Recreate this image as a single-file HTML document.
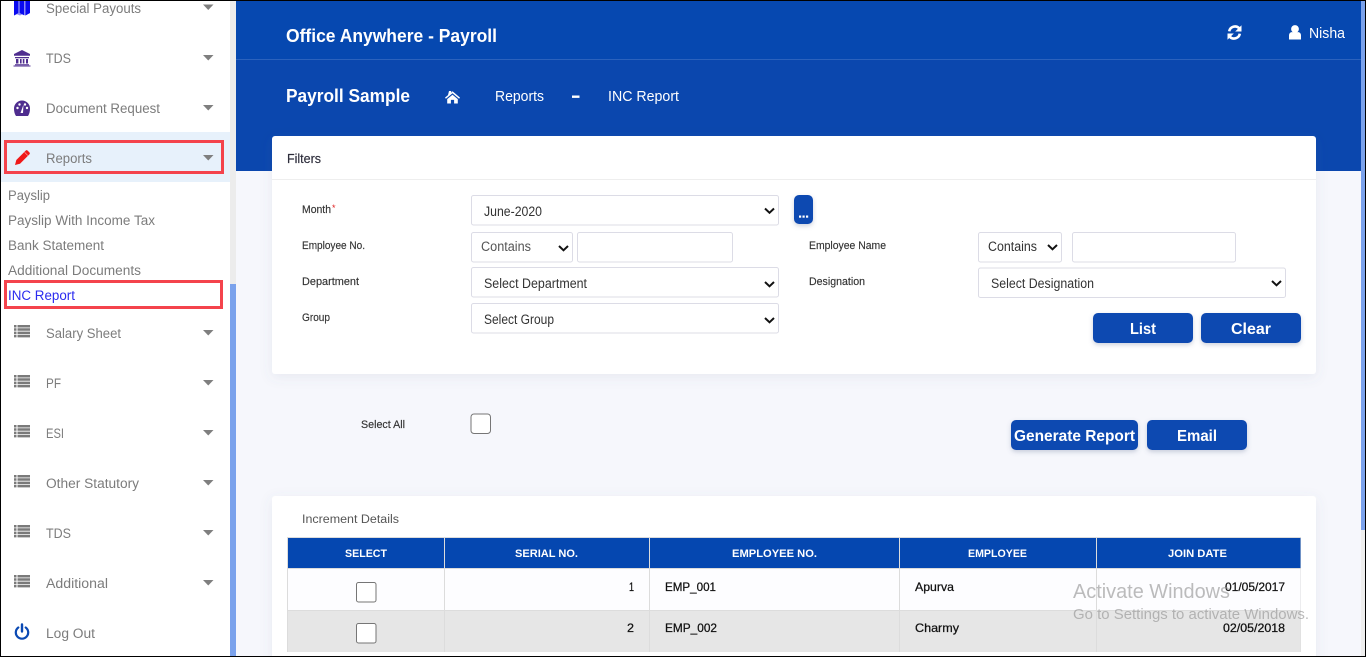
<!DOCTYPE html>
<html lang="en"><head><meta charset="utf-8"><title>INC Report</title>
<style>
html,body{margin:0;padding:0;width:1366px;height:657px;overflow:hidden;background:#000}
svg{display:block}
text{font-family:"Liberation Sans",sans-serif;white-space:pre}
.s{font-size:13.5px;fill:#7c7c7c}
.l{font-size:11px;fill:#333;stroke:#333;stroke-width:.15}
.c{font-size:13.5px;fill:#333}
.w{fill:#fff}
.b{font-size:16px;font-weight:700;fill:#fff}
.h{font-size:11px;font-weight:700;fill:#fff}
.d{font-size:12px;fill:#111;stroke:#111;stroke-width:.25}
.box{fill:#fff;stroke:#dcdce6;stroke-width:1}
.ar{fill:#7f7f7f}
.ch{fill:none;stroke:#111;stroke-width:2}
.cb{fill:#fff;stroke:#767676;stroke-width:1}
.btn{fill:#0c49b1;filter:url(#sh)}
</style></head>
<body>
<svg width="1366" height="657" viewBox="0 0 1366 657" xmlns="http://www.w3.org/2000/svg">
<defs>
<filter id="sh" x="-20%" y="-30%" width="140%" height="170%"><feDropShadow dx="0" dy="2" stdDeviation="2.5" flood-color="#5a6a90" flood-opacity=".3"/></filter>
<filter id="sc" x="-5%" y="-10%" width="110%" height="125%"><feDropShadow dx="0" dy="3" stdDeviation="6" flood-color="#5a6a90" flood-opacity=".1"/></filter>
<g id="list" fill="#7a7a7a"><path d="M0 0h2.500v2.500H0zM3.500 0H16v2.500H3.500zM0 3.300h2.500v2.500H0zM3.500 3.300H16v2.500H3.500zM0 6.600h2.500v2.500H0zM3.500 6.600H16v2.500H3.500zM0 9.900h2.500v2.500H0zM3.500 9.900H16v2.500H3.500z"/></g>
<path id="arr" class="ar" d="M0 0h10.500L5.250 5.500z"/>
</defs>

<!-- page -->
<rect x="1" y="1" width="1364" height="655" fill="#f6f7fc"/>
<rect x="236" y="1" width="1125" height="170" fill="#0648b0"/>
<rect x="236" y="60" width="1125" height="111" fill="#0b47ae"/>
<rect x="236" y="59" width="1125" height="1" fill="#2b62bd"/>

<!-- sidebar -->
<rect x="1" y="1" width="229" height="655" fill="#fff"/>
<rect x="1" y="132" width="229" height="50" fill="#e7f1fb"/>
<rect x="230" y="1" width="6" height="655" fill="#ececec"/>
<rect x="230" y="284" width="6" height="372" fill="#7ba2ec"/>
<rect x="1361" y="1" width="4" height="655" fill="#eeeeee"/>
<rect x="1361" y="1" width="4" height="529" fill="#7ba2ec"/>

<!-- sidebar icons -->
<path d="M14 0h16v13l-5 2.500-2.500-1.200-2.500 1.200-3-1.200L14 15.500z" fill="#8a8af5"/>
<path d="M14 0h4.300v13l-4.300 2.500zM19.700 0h4.300v15.300l-4.300-2.300zM25.500 0H30v13l-4.500 2.500z" fill="#0a0af0"/>
<path d="M22 50l8 4v1.800H14V54zM15 57h14v1.200H15zM16 59h2.400v4.500H16zM20 59h1.600v4.500H20zM22.800 59h1.600v4.500h-1.600zM26 59h2v4.500h-2zM15 64.200h14v1H15zM13.500 65.500h17v1h-17z" fill="#4f2d8f"/>
<path d="M22 100.500a8 8 0 0 1 8 8c0 3-.6 5.500-2 7.500H16c-1.400-2-2-4.500-2-7.500a8 8 0 0 1 8-8z" fill="#4f2d8f"/>
<circle cx="17.500" cy="108" r="1.200" fill="#fff"/><circle cx="19.500" cy="104.500" r="1.200" fill="#fff"/><circle cx="25" cy="104.500" r="1.200" fill="#fff"/><circle cx="27" cy="108" r="1.200" fill="#fff"/>
<path d="M23.500 104.500l-.5 8.500h-2.500z" fill="#fff"/>
<path d="M15 165l1.300-5 9.500-9.500a1.200 1.200 0 0 1 1.700 0l2 2a1.200 1.200 0 0 1 0 1.700l-9.500 9.500z" fill="#f01818"/>
<path d="M24.600 152.300l3.200 3.200" stroke="#ff9a9a" stroke-width=".7" fill="none"/>
<use href="#list" x="14" y="325"/><use href="#list" x="14" y="375"/><use href="#list" x="14" y="425"/><use href="#list" x="14" y="475"/><use href="#list" x="14" y="525"/><use href="#list" x="14" y="575"/>
<path d="M18.300 627.500a6.200 6.200 0 1 0 7.400 0" fill="none" stroke="#0a49b3" stroke-width="2.200" stroke-linecap="round"/>
<path d="M22 624.500v7" stroke="#0a49b3" stroke-width="2.400" stroke-linecap="round"/>

<!-- arrows -->
<use href="#arr" x="203" y="4.500"/><use href="#arr" x="203" y="55"/><use href="#arr" x="203" y="105"/><use href="#arr" x="203" y="155"/><use href="#arr" x="203" y="330"/><use href="#arr" x="203" y="380"/><use href="#arr" x="203" y="430"/><use href="#arr" x="203" y="480"/><use href="#arr" x="203" y="530"/><use href="#arr" x="203" y="580"/>

<!-- sidebar text -->
<text class="s" x="46" y="13" textLength="95" lengthAdjust="spacingAndGlyphs">Special Payouts</text>
<text class="s" x="46" y="63" textLength="25" lengthAdjust="spacingAndGlyphs">TDS</text>
<text class="s" x="46" y="113" textLength="114" lengthAdjust="spacingAndGlyphs">Document Request</text>
<text class="s" x="46" y="163" textLength="46" lengthAdjust="spacingAndGlyphs">Reports</text>
<text class="s" x="8" y="200" textLength="42" lengthAdjust="spacingAndGlyphs">Payslip</text>
<text class="s" x="8" y="225" textLength="147" lengthAdjust="spacingAndGlyphs">Payslip With Income Tax</text>
<text class="s" x="8" y="250" textLength="96" lengthAdjust="spacingAndGlyphs">Bank Statement</text>
<text class="s" x="8" y="275" textLength="133" lengthAdjust="spacingAndGlyphs">Additional Documents</text>
<text class="s" x="8" y="300" textLength="67" lengthAdjust="spacingAndGlyphs" style="fill:#2b2bef">INC Report</text>
<text class="s" x="46" y="338" textLength="75" lengthAdjust="spacingAndGlyphs">Salary Sheet</text>
<text class="s" x="46" y="388" textLength="15" lengthAdjust="spacingAndGlyphs">PF</text>
<text class="s" x="46" y="438" textLength="18" lengthAdjust="spacingAndGlyphs">ESI</text>
<text class="s" x="46" y="488" textLength="93" lengthAdjust="spacingAndGlyphs">Other Statutory</text>
<text class="s" x="46" y="538" textLength="25" lengthAdjust="spacingAndGlyphs">TDS</text>
<text class="s" x="46" y="588" textLength="62" lengthAdjust="spacingAndGlyphs">Additional</text>
<text class="s" x="46" y="638" textLength="49" lengthAdjust="spacingAndGlyphs">Log Out</text>

<!-- red highlight boxes -->
<rect x="5.500" y="141.500" width="217" height="31" fill="none" stroke="#f4434c" stroke-width="3"/>
<rect x="5.500" y="281.500" width="216" height="26" fill="none" stroke="#f4434c" stroke-width="3"/>

<!-- header text -->
<text class="w" x="286" y="42" font-size="18.500" font-weight="700" textLength="211" lengthAdjust="spacingAndGlyphs">Office Anywhere - Payroll</text>
<text class="w" x="286" y="102" font-size="18.500" font-weight="700" textLength="124" lengthAdjust="spacingAndGlyphs">Payroll Sample</text>
<path d="M449 91h2.200v1.700L452.500 91.300l7.500 6.300-.9 1.100-6.600-5.500-6.600 5.500-.9-1.100 3-2.500zM452.500 94.700l5.300 4.400v4.400h-3.700v-3.600h-3.200v3.600h-3.700v-4.400z" fill="#fff"/>
<text class="w" x="495" y="101" font-size="14.500" textLength="49" lengthAdjust="spacingAndGlyphs">Reports</text>
<rect x="572" y="95.500" width="7.500" height="2.400" fill="#fff"/>
<text class="w" x="608" y="101" font-size="14.500" textLength="71" lengthAdjust="spacingAndGlyphs">INC Report</text>
<path d="M1229.200 31.300a5.900 5.900 0 0 1 10-3.100" fill="none" stroke="#fff" stroke-width="2.600"/>
<path d="M1241.500 25.200v6.300h-6.300z" fill="#fff"/>
<path d="M1239.800 33.700a5.900 5.900 0 0 1-10 3.100" fill="none" stroke="#fff" stroke-width="2.600"/>
<path d="M1227.500 39.800v-6.300h6.300z" fill="#fff"/>
<circle cx="1295" cy="29" r="3.900" fill="#fff"/>
<path d="M1289 39.500v-4c0-2.200 1.300-3.400 3-3.400h6c1.700 0 3 1.200 3 3.400v4z" fill="#fff"/>
<text class="w" x="1309" y="38" font-size="14.500" textLength="36" lengthAdjust="spacingAndGlyphs">Nisha</text>

<!-- filter card -->
<rect x="272" y="136" width="1044" height="238" rx="3" fill="#fff" filter="url(#sc)"/>
<rect x="272" y="179" width="1044" height="1" fill="#eeeeee"/>
<text x="287" y="163" font-size="12.500" fill="#2c2c3a" stroke="#2c2c3a" stroke-width=".15" textLength="34" lengthAdjust="spacingAndGlyphs">Filters</text>

<text class="l" x="302" y="213" textLength="29" lengthAdjust="spacingAndGlyphs">Month</text>
<text x="332" y="211" font-size="9" fill="#e02020">*</text>
<text class="l" x="302" y="249" textLength="63" lengthAdjust="spacingAndGlyphs">Employee No.</text>
<text class="l" x="302" y="285" textLength="57" lengthAdjust="spacingAndGlyphs">Department</text>
<text class="l" x="302" y="321" textLength="28" lengthAdjust="spacingAndGlyphs">Group</text>
<text class="l" x="809" y="249" textLength="77" lengthAdjust="spacingAndGlyphs">Employee Name</text>
<text class="l" x="809" y="285" textLength="56" lengthAdjust="spacingAndGlyphs">Designation</text>

<rect class="box" x="471.500" y="195.500" width="307" height="29.500" rx="2"/>
<rect class="box" x="471.500" y="232.500" width="101" height="29.500" rx="2"/>
<rect class="box" x="577.500" y="232.500" width="155" height="29.500" rx="2"/>
<rect class="box" x="471.500" y="267.500" width="307" height="29.500" rx="2"/>
<rect class="box" x="471.500" y="303.500" width="307" height="29.500" rx="2"/>
<rect class="box" x="978.500" y="232.500" width="83" height="29.500" rx="2"/>
<rect class="box" x="1072.500" y="232.500" width="163" height="29.500" rx="2"/>
<rect class="box" x="978.500" y="268" width="307" height="29.500" rx="2"/>

<text class="c" x="484" y="216" textLength="58" lengthAdjust="spacingAndGlyphs">June-2020</text>
<text class="c" x="481" y="251" textLength="50" lengthAdjust="spacingAndGlyphs" style="fill:#555">Contains</text>
<text class="c" x="484" y="288" textLength="103" lengthAdjust="spacingAndGlyphs">Select Department</text>
<text class="c" x="484" y="324" textLength="70" lengthAdjust="spacingAndGlyphs">Select Group</text>
<text class="c" x="988" y="251" textLength="49" lengthAdjust="spacingAndGlyphs">Contains</text>
<text class="c" x="991" y="288" textLength="103" lengthAdjust="spacingAndGlyphs">Select Designation</text>

<path class="ch" d="M765 208.500l4.500 4.300 4.500-4.300"/>
<path class="ch" d="M559 246l4.500 4.300 4.500-4.300"/>
<path class="ch" d="M765 282l4.500 4.300 4.500-4.300"/>
<path class="ch" d="M765 318l4.500 4.300 4.500-4.300"/>
<path class="ch" d="M1048 245l4.500 4.300 4.500-4.300"/>
<path class="ch" d="M1272 281l4.500 4.300 4.500-4.300"/>

<rect class="btn" x="794" y="195" width="19" height="29" rx="5"/>
<rect x="799" y="215.500" width="2.200" height="2.200" fill="#fff"/><rect x="802.500" y="215.500" width="2.200" height="2.200" fill="#fff"/><rect x="806" y="215.500" width="2.200" height="2.200" fill="#fff"/>

<rect class="btn" x="1093" y="313" width="100" height="30" rx="5"/>
<rect class="btn" x="1201" y="313" width="100" height="30" rx="5"/>
<text class="b" x="1130" y="334" textLength="26" lengthAdjust="spacingAndGlyphs">List</text>
<text class="b" x="1231" y="334" textLength="40" lengthAdjust="spacingAndGlyphs">Clear</text>

<!-- select all -->
<text class="l" x="361" y="428" textLength="44" lengthAdjust="spacingAndGlyphs">Select All</text>
<rect class="cb" x="471" y="414" width="19.500" height="19.500" rx="3"/>
<rect class="btn" x="1011" y="420" width="127" height="30" rx="5"/>
<rect class="btn" x="1147" y="420" width="100" height="30" rx="5"/>
<text class="b" x="1014" y="441" textLength="121" lengthAdjust="spacingAndGlyphs">Generate Report</text>
<text class="b" x="1177" y="441" textLength="40" lengthAdjust="spacingAndGlyphs">Email</text>

<!-- table card -->
<rect x="272" y="496" width="1044" height="180" rx="3" fill="#fff" filter="url(#sc)"/>
<text x="302" y="523" font-size="11.500" fill="#555" textLength="97" lengthAdjust="spacingAndGlyphs">Increment Details</text>

<rect x="287" y="537" width="1014" height="115" fill="#dcdcdc"/>
<rect x="288" y="538" width="156" height="30" fill="#0547b0"/>
<rect x="445" y="538" width="204" height="30" fill="#0547b0"/>
<rect x="650" y="538" width="249" height="30" fill="#0547b0"/>
<rect x="900" y="538" width="196" height="30" fill="#0547b0"/>
<rect x="1097" y="538" width="203.500" height="30" fill="#0547b0"/>

<rect x="288" y="569" width="156" height="41" fill="#fdfdff"/>
<rect x="445" y="569" width="204" height="41" fill="#fdfdff"/>
<rect x="650" y="569" width="249" height="41" fill="#fdfdff"/>
<rect x="900" y="569" width="196" height="41" fill="#fdfdff"/>
<rect x="1097" y="569" width="203.500" height="41" fill="#fdfdff"/>
<rect x="288" y="611" width="156" height="41" fill="#e6e6e6"/>
<rect x="445" y="611" width="204" height="41" fill="#e6e6e6"/>
<rect x="650" y="611" width="249" height="41" fill="#e6e6e6"/>
<rect x="900" y="611" width="196" height="41" fill="#e6e6e6"/>
<rect x="1097" y="611" width="203.500" height="41" fill="#e6e6e6"/>

<text class="h" x="345" y="557" textLength="42" lengthAdjust="spacingAndGlyphs">SELECT</text>
<text class="h" x="515" y="557" textLength="63" lengthAdjust="spacingAndGlyphs">SERIAL NO.</text>
<text class="h" x="732" y="557" textLength="85" lengthAdjust="spacingAndGlyphs">EMPLOYEE NO.</text>
<text class="h" x="968" y="557" textLength="59" lengthAdjust="spacingAndGlyphs">EMPLOYEE</text>
<text class="h" x="1168" y="557" textLength="59" lengthAdjust="spacingAndGlyphs">JOIN DATE</text>

<rect class="cb" x="356.500" y="582.500" width="19.500" height="19.500" rx="2"/>
<rect class="cb" x="356.500" y="623.500" width="19.500" height="19.500" rx="2"/>

<text class="d" x="629" y="591" textLength="5" lengthAdjust="spacingAndGlyphs">1</text>
<text class="d" x="665" y="591" textLength="51" lengthAdjust="spacingAndGlyphs">EMP_001</text>
<text class="d" x="915" y="591" textLength="39" lengthAdjust="spacingAndGlyphs">Apurva</text>
<text class="d" x="1225" y="591" textLength="60" lengthAdjust="spacingAndGlyphs">01/05/2017</text>
<text class="d" x="627" y="632" textLength="7" lengthAdjust="spacingAndGlyphs">2</text>
<text class="d" x="665" y="632" textLength="52" lengthAdjust="spacingAndGlyphs">EMP_002</text>
<text class="d" x="915" y="632" textLength="44" lengthAdjust="spacingAndGlyphs">Charmy</text>
<text class="d" x="1223" y="632" textLength="62" lengthAdjust="spacingAndGlyphs">02/05/2018</text>

<!-- watermark -->
<text x="1073" y="598" font-size="20" fill="#8f8f8f" fill-opacity=".6" textLength="157" lengthAdjust="spacingAndGlyphs">Activate Windows</text>
<text x="1073" y="619" font-size="14.500" fill="#8f8f8f" fill-opacity=".6" textLength="236" lengthAdjust="spacingAndGlyphs">Go to Settings to activate Windows.</text>

<!-- screenshot frame -->
<rect x=".5" y=".5" width="1365" height="656" fill="none" stroke="#000" stroke-width="1"/>
</svg>
</body></html>
